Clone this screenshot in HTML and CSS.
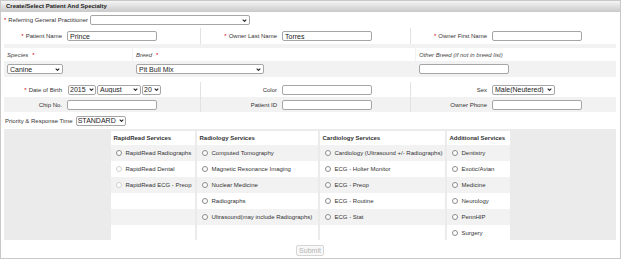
FILE: index.html
```html
<!DOCTYPE html>
<html lang="en">
<head>
  <meta charset="UTF-8" />
  <title>Create/Select Patient And Specialty</title>
  <link rel="stylesheet" href="styles.css">
</head>
<body>
  <div class="panel">
    <div class="panel-head">Create/Select Patient And Specialty</div>

    <form class="panel-body">
      <div class="row-gp">
        <label><span class="req">*</span>Referring General Practitioner</label>
        <select class="w160"><option></option></select>
      </div>

      <div class="frow tall">
        <label class="lbl"><span class="req">*</span>Patient Name</label>
        <div class="fld"><input type="text" class="w90" value="Prince" /></div>
        <label class="lbl sep"><span class="req">*</span>Owner Last Name</label>
        <div class="fld"><input type="text" class="w90" value="Torres" /></div>
        <label class="lbl sep"><span class="req">*</span>Owner First Name</label>
        <div class="fld"><input type="text" class="w90" /></div>
      </div>

      <!-- species / breed block -->
      <div class="species">
        <div class="sp-head">Species <span class="req">*</span></div>
        <div class="sp-head">Breed <span class="req">*</span></div>
        <div class="sp-head">Other Breed (if not in breed list)</div>
        <div class="sp-cell"><select class="w56"><option>Canine</option></select></div>
        <div class="sp-cell"><select class="w128"><option>Pit Bull Mix</option></select></div>
        <div class="sp-cell"><input type="text" class="w90" /></div>
      </div>

      <div class="frow">
        <label class="lbl"><span class="req">*</span>Date of Birth</label>
        <div class="fld dob">
          <select class="w28 tight"><option>2015</option></select>
          <select class="w44"><option>August</option></select>
          <select class="w19 tight"><option>20</option></select>
        </div>
        <label class="lbl sep">Color</label>
        <div class="fld"><input type="text" class="w90" /></div>
        <label class="lbl sep">Sex</label>
        <div class="fld"><select class="w63"><option>Male(Neutered)</option></select></div>
      </div>
      <div class="frow alt">
        <label class="lbl">Chip No.</label>
        <div class="fld"><input type="text" class="w90" /></div>
        <label class="lbl sep">Patient ID</label>
        <div class="fld"><input type="text" class="w90" /></div>
        <label class="lbl sep">Owner Phone</label>
        <div class="fld"><input type="text" class="w90" /></div>
      </div>

      <div class="row-prio">
        <label>Priority &amp; Response Time</label>
        <select class="w50 tight"><option>STANDARD</option></select>
      </div>

      <div class="services">
        <table class="svc">
          <colgroup>
            <col style="width:84px"><col style="width:121px"><col style="width:125px"><col style="width:63px">
          </colgroup>
          <tr>
            <th>RapidRead Services</th>
            <th>Radiology Services</th>
            <th>Cardiology Services</th>
            <th>Additional Services</th>
          </tr>
          <tr>
            <td><label><input type="radio" name="svc" /> RapidRead Radiographs</label></td>
            <td><label><input type="radio" name="svc" /> Computed Tomography</label></td>
            <td><label><input type="radio" name="svc" /> Cardiology (Ultrasound +/- Radiographs)</label></td>
            <td><label><input type="radio" name="svc" /> Dentistry</label></td>
          </tr>
          <tr>
            <td><label><input type="radio" name="svc" disabled /> RapidRead Dental</label></td>
            <td><label><input type="radio" name="svc" /> Magnetic Resonance Imaging</label></td>
            <td><label><input type="radio" name="svc" /> ECG - Holter Monitor</label></td>
            <td><label><input type="radio" name="svc" /> Exotic/Avian</label></td>
          </tr>
          <tr>
            <td><label><input type="radio" name="svc" disabled /> RapidRead ECG - Preop</label></td>
            <td><label><input type="radio" name="svc" /> Nuclear Medicine</label></td>
            <td><label><input type="radio" name="svc" /> ECG - Preop</label></td>
            <td><label><input type="radio" name="svc" /> Medicine</label></td>
          </tr>
          <tr>
            <td></td>
            <td><label><input type="radio" name="svc" /> Radiographs</label></td>
            <td><label><input type="radio" name="svc" /> ECG - Routine</label></td>
            <td><label><input type="radio" name="svc" /> Neurology</label></td>
          </tr>
          <tr>
            <td></td>
            <td><label><input type="radio" name="svc" /> Ultrasound(may include Radiographs)</label></td>
            <td><label><input type="radio" name="svc" /> ECG - Stat</label></td>
            <td><label><input type="radio" name="svc" /> PennHIP</label></td>
          </tr>
          <tr>
            <td></td>
            <td></td>
            <td></td>
            <td><label><input type="radio" name="svc" /> Surgery</label></td>
          </tr>
        </table>
      </div>

      <div class="row-submit">
        <button type="submit" disabled>Submit</button>
      </div>
    </form>
  </div>
</body>
</html>
```

FILE: styles.css
```css
* { box-sizing: border-box; }
body { margin: 0; font-family: "Liberation Sans", Arial, sans-serif; font-size: 6px; color: #333; background: #fff; }

.panel { width: 621px; height: 259px; border: 1px solid #c9c9c9; display: flex; flex-direction: column; }
.panel-head { height: 11px; line-height: 11px; padding-left: 5px; font-weight: bold; color: #222; background: linear-gradient(#f5f5f5, #c9c9c9); }
.panel-body { flex: 1; padding: 0 4px 0 3px; display: flex; flex-direction: column; }

input, select, button { font-family: "Liberation Sans", Arial, sans-serif; font-size: 7px; color: #222; height: 10px; margin: 0; }
input[type=text] { border: 1px solid #a6a6a6; border-radius: 2px; padding: 0 2px; background: #fff; }
select {
  appearance: none; border: 1px solid #a6a6a6; border-radius: 2px; padding: 0 7px 0 2px;
  background: #fff url("data:image/svg+xml,%3Csvg xmlns='http://www.w3.org/2000/svg' viewBox='0 0 8 5'%3E%3Cpath d='M1 1l3 3 3-3' fill='none' stroke='%23222' stroke-width='1.7'/%3E%3C/svg%3E") no-repeat right 2px center / 5px 3px;
}
select.tight { padding: 0 6px 0 1px; background-position: right 1px center; }

.req { color: #d80000; margin-right: 2px; }

.w19 { width: 19px; } .w28 { width: 28px; } .w44 { width: 44px; } .w50 { width: 50px; }
.w56 { width: 56px; } .w63 { width: 63px; } .w90 { width: 90px; } .w128 { width: 128px; } .w160 { width: 160px; }

.row-gp { height: 16px; display: flex; align-items: center; gap: 2px; }

.frow { display: grid; grid-template-columns: 61px 135px 80px 130px 80px 126px; }
.frow > * { height: 15px; display: flex; align-items: center; }
.frow.tall > * { height: 16px; }
.frow.alt { background: #f2f2f2; }
.lbl { justify-content: flex-end; padding-right: 3px; }
.fld { padding-left: 2px; }
.dob { gap: 1px; padding-left: 3px; }
.sep { border-left: 1px solid #e2e2e2; }

.species { display: grid; grid-template-columns: 128px 282px 200px; column-gap: 1px; background: #f2f2f2; padding-top: 4px; margin-bottom: 5px; }
.sp-head { background: #fff; height: 13px; display: flex; align-items: center; padding-left: 3px; font-style: italic; color: #444; }
.sp-head .req { margin-left: 4px; font-style: normal; }
.sp-cell { height: 16px; display: flex; align-items: center; padding-left: 3px; }

.row-prio { height: 17px; display: flex; align-items: center; gap: 3px; padding-left: 1px; }

.services { background: #ebebeb; padding-top: 2px; height: 111px; }
.svc { margin: 0 auto; border-collapse: separate; border-spacing: 2px 0; table-layout: fixed; }
.svc th { background: #fff; height: 14px; padding: 0 3px; text-align: left; font-weight: bold; color: #333; white-space: nowrap; }
.svc td { height: 16px; padding: 0; white-space: nowrap; background: #fff; }
.svc tr:nth-child(even) td { background: #f2f2f2; }
.svc label { display: flex; align-items: center; }
.svc input[type=radio] { appearance: none; width: 6px; height: 6px; margin: 0 4px 0 5px; border: 1px solid #8c8c8c; border-radius: 50%; background: #fff; }
.svc input[type=radio]:disabled { border-color: #d2d2d2; }

.row-submit { display: flex; justify-content: center; padding-top: 5px; }
.row-submit button { width: 28px; height: 11px; padding: 0; color: #b4b4b4; background: #f8f8f8; border: 1px solid #d6d6d6; border-radius: 2px; }
```
